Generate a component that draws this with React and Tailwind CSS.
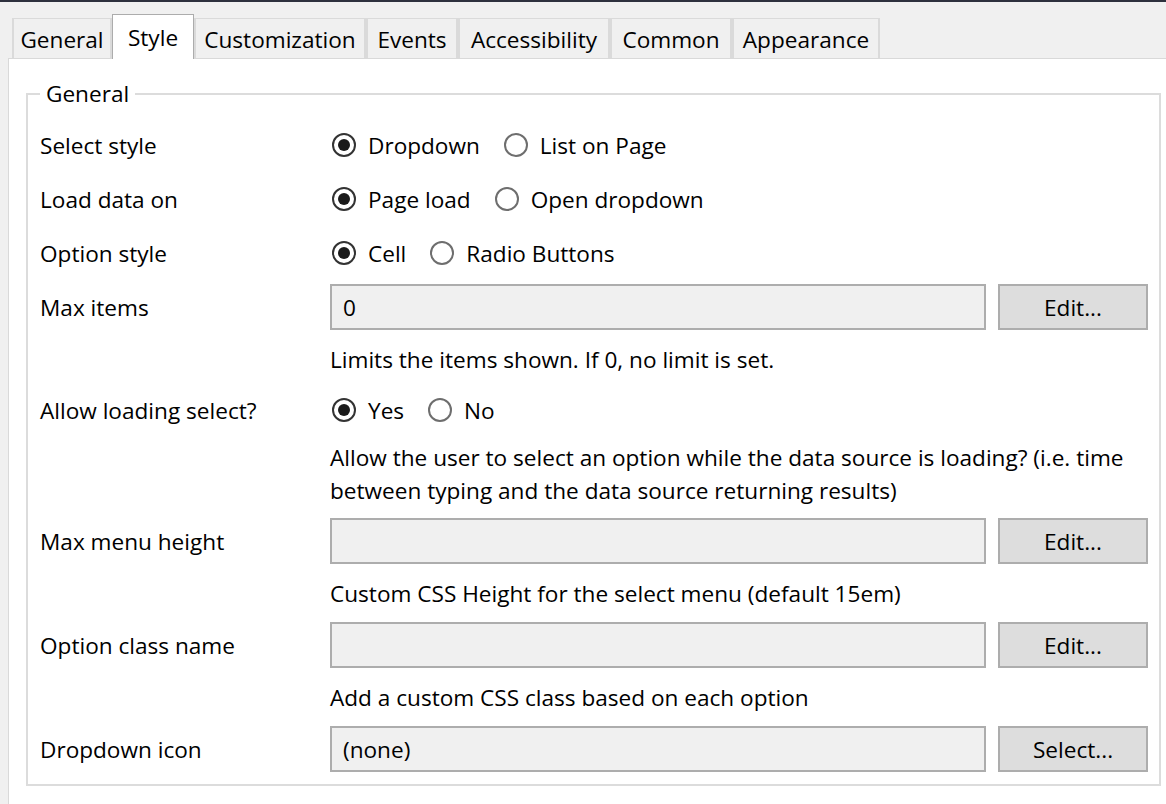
import React from 'react';

const tabs = [
  { label: 'General', w: 'w-[100px]' },
  { label: 'Style', w: 'w-[82px]', active: true },
  { label: 'Customization', w: 'w-[172px]' },
  { label: 'Events', w: 'w-[92px]' },
  { label: 'Accessibility', w: 'w-[152px]' },
  { label: 'Common', w: 'w-[122px]' },
  { label: 'Appearance', w: 'w-[148px]' },
];

function Radio({ checked, label }) {
  return (
    <div className="flex items-center">
      <span
        className={
          'flex h-[24px] w-[24px] items-center justify-center rounded-full border-2 bg-white ' +
          (checked ? 'border-[#333333]' : 'border-[#6e6e6e]')
        }
      >
        {checked && <span className="h-[12px] w-[12px] rounded-full bg-[#1a1a1a]" />}
      </span>
      <span className="ml-[12px]">{label}</span>
    </div>
  );
}

function RadioRow({ label, options }) {
  return (
    <div className="flex h-[54px] items-center">
      <div className="w-[292px] shrink-0">{label}</div>
      <div className="flex items-center gap-[24px]">
        {options.map((o, i) => (
          <Radio key={o} label={o} checked={i === 0} />
        ))}
      </div>
    </div>
  );
}

function InputRow({ label, value, button = 'Edit...' }) {
  return (
    <div className="flex h-[54px] items-center">
      <div className="w-[290px] shrink-0">{label}</div>
      <div className="flex h-[46px] flex-1 items-center border-2 border-[#adadad] bg-[#f0f0f0] px-[11px]">
        {value}
      </div>
      <button className="ml-[12px] h-[46px] w-[150px] border-2 border-[#adadad] bg-[#dddddd] text-center">
        {button}
      </button>
    </div>
  );
}

function Hint({ children, className }) {
  return <div className={'pl-[290px] ' + className}>{children}</div>;
}

export default function App() {
  return (
    <div
      className="flex h-[804px] w-[1166px] flex-col overflow-hidden bg-[#f0f0f0] text-[22.6px] leading-[33px] text-black"
      style={{ fontFamily: '"Open Sans", "Noto Sans", sans-serif' }}
    >
      <div className="h-[2px] shrink-0 bg-[#2d303d]" />

      {/* Tabs */}
      <div className="flex h-[56px] shrink-0 items-end pl-[12px]">
        {tabs.map((t) =>
          t.active ? (
            <div
              key={t.label}
              className={'relative z-10 -mb-px flex h-[45px] items-center justify-center border border-b-0 border-[#acacac] bg-white ' + t.w}
            >
              {t.label}
            </div>
          ) : (
            <div
              key={t.label}
              className={'flex h-[40px] items-center justify-center border-x-2 border-t border-[#dadada] bg-[#f0f0f0] pt-[2px] ' + t.w}
            >
              {t.label}
            </div>
          )
        )}
      </div>

      {/* Panel */}
      <div className="ml-[8px] w-[1180px] flex-1 shrink-0 border-l border-t border-[#d9d9d9] bg-white pl-[17px]">
        <fieldset className="m-0 mt-[18px] w-[1135px] border-2 border-[#dcdcdc] pb-[8px] pl-[12px] pr-[11px] pt-[8px]">
          <legend className="ml-0 px-[6px]">General</legend>

          <RadioRow label="Select style" options={['Dropdown', 'List on Page']} />
          <RadioRow label="Load data on" options={['Page load', 'Open dropdown']} />
          <RadioRow label="Option style" options={['Cell', 'Radio Buttons']} />
          <InputRow label="Max items" value="0" />
          <Hint className="pt-[9px] pb-[7px]">Limits the items shown. If 0, no limit is set.</Hint>
          <RadioRow label="Allow loading select?" options={['Yes', 'No']} />
          <Hint className="pt-[4px] pb-[7px]">
            Allow the user to select an option while the data source is loading? (i.e. time
            <br />
            between typing and the data source returning results)
          </Hint>
          <InputRow label="Max menu height" value="" />
          <Hint className="pt-[9px] pb-[8px]">Custom CSS Height for the select menu (default 15em)</Hint>
          <InputRow label="Option class name" value="" />
          <Hint className="pt-[9px] pb-[8px]">Add a custom CSS class based on each option</Hint>
          <InputRow label="Dropdown icon" value="(none)" button="Select..." />
        </fieldset>
      </div>
    </div>
  );
}
